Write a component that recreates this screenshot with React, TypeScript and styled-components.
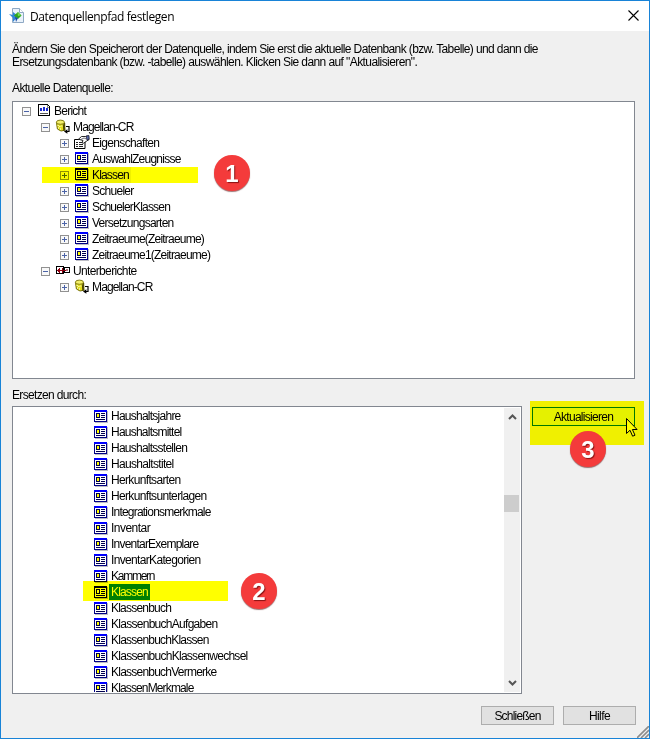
import React from "react";
import styled, { createGlobalStyle } from "styled-components";

const GlobalStyle = createGlobalStyle`
  * { box-sizing: border-box; }
  body { margin: 0; background: #f0f0f0; }
`;

const Dialog = styled.div`
  position: relative;
  width: 650px;
  height: 739px;
  display: flex;
  flex-direction: column;
  overflow: hidden;
  border: 1px solid #1883d7;
  background: #f0f0f0;
  color: #000;
  font: 12px/16px "Liberation Sans", Arial, sans-serif;
  white-space: pre;
`;

const TitleBar = styled.header`
  display: flex;
  align-items: center;
  height: 30px;
  padding: 0 10px 0 8px;
  background: #fff;
`;

const Title = styled.h1`
  flex: 1;
  margin: 1px 0 0 5px;
  font: 12px/16px "Open Sans", "Noto Sans", sans-serif;
  letter-spacing: -0.42px;
`;

const CloseButton = styled.button`
  display: flex;
  margin-top: -1px;
  padding: 0;
  border: 0;
  background: none;
`;

const Body = styled.main`
  display: flex;
  flex-direction: column;
  padding: 12px 0 0 11px;
`;

const Line = styled.span<{ $track: number }>`
  display: block;
  letter-spacing: ${(p) => p.$track}px;
`;

const Description = styled.p`
  margin: 0;
  height: 37px;
  line-height: 13px;
`;

const Caption = styled.div<{ $track: number; $gap?: number }>`
  height: ${(p) => 21 - (p.$gap ? 2 : 0)}px;
  margin-top: ${(p) => p.$gap ?? 0}px;
  letter-spacing: ${(p) => p.$track}px;
  line-height: 17px;
`;

const Panel = styled.div<{ $w: number; $h: number }>`
  display: flex;
  width: ${(p) => p.$w}px;
  height: ${(p) => p.$h}px;
  padding: 1px;
  border: 1px solid #828790;
  background: #fff;
`;

const Rows = styled.div<{ $indent: number }>`
  flex: 1;
  overflow: hidden;
  padding-left: ${(p) => p.$indent}px;
`;

const Row = styled.div<{ $level: number }>`
  display: flex;
  align-items: center;
  height: 16px;
  padding-left: ${(p) => p.$level * 19}px;
`;

const Slot = styled.span<{ $drop?: number }>`
  display: flex;
  flex: none;
  width: 16px;
  height: 16px;
  padding-top: ${(p) => p.$drop ?? 0}px;
`;

const RowText = styled.span<{ $state?: "dim" | "active"; $track: number }>`
  height: 16px;
  padding: 0 2px;
  letter-spacing: ${(p) => p.$track}px;
  background: ${(p) => (p.$state === "dim" ? "#f0f0f0" : p.$state === "active" ? "#008000" : "none")};
  color: ${(p) => (p.$state === "active" ? "#fff" : "#000")};
`;

const Toggle = styled.svg`
  flex: none;
  margin: 1px 5px 0 0;
`;

const Scrollbar = styled.div`
  display: flex;
  flex-direction: column;
  align-items: center;
  width: 16px;
  padding: 5px 0;
  background: #f0f0f0;
`;

const Thumb = styled.div`
  width: 15px;
  height: 17px;
  margin: 73px 1px auto 0;
  background: #cdcdcd;
`;

const Columns = styled.div`
  display: flex;
  gap: 10px;
`;

const Button = styled.button<{ $w: number; $track: number; $focus?: boolean }>`
  width: ${(p) => p.$w}px;
  height: 19px;
  padding: 1px 0 0;
  border: 1px solid ${(p) => (p.$focus ? "#0078d7" : "#adadad")};
  background: ${(p) => (p.$focus ? "#e5f1fb" : "#e1e1e1")};
  color: #000;
  font: inherit;
  letter-spacing: ${(p) => p.$track}px;
  line-height: 16px;
`;

const ActionSlot = styled.div`
  padding-top: 1px;
`;

const Footer = styled.footer`
  display: flex;
  gap: 9px;
  padding: 12px 0 0 469px;
`;

const Marker = styled.div<{ $x: number; $y: number; $w: number; $h: number }>`
  position: absolute;
  left: ${(p) => p.$x}px;
  top: ${(p) => p.$y}px;
  width: ${(p) => p.$w}px;
  height: ${(p) => p.$h}px;
  background: #ff0;
  mix-blend-mode: multiply;
`;

const Badge = styled.div<{ $x: number; $y: number }>`
  position: absolute;
  left: ${(p) => p.$x}px;
  top: ${(p) => p.$y}px;
  width: 36px;
  height: 36px;
  border-radius: 50%;
  background: #f43b3b;
  box-shadow: 0 1px 1px rgba(90, 20, 20, 0.6);
  color: #fff;
  font: bold 24px/37px "Liberation Sans", Arial, sans-serif;
  text-align: center;
  text-shadow: 1px 1px 1px rgba(90, 0, 0, 0.7);
`;

const Pointer = styled.svg`
  position: absolute;
  left: 624px;
  top: 416px;
`;

const Grip = styled.svg`
  position: absolute;
  right: 0;
  bottom: 0;
`;

type Kind = "report" | "db" | "props" | "table" | "sub";

function Icon({ kind }: { kind: Kind }) {
  return (
    <svg width="16" height="16" viewBox="0 0 16 16" shapeRendering="crispEdges">
      {kind === "table" && (
        <>
          <path d="M2 2h13v12H2z" fill="#bdbdc4" />
          <path d="M1 1h13v12H1z" fill="#000084" />
          <path d="M1 1h13v2H1z" fill="#00f" />
          <path d="M2 3h11v9H2z" fill="#fff" />
          <path d="M3 4h4v5H3zM8 4h4v1H8zM8 6h4v1H8zM8 8h4v1H8zM3 10h9v1H3z" fill="#000050" />
          <path d="M4 5h2v3H4z" fill="#ff0" />
        </>
      )}
      {kind === "report" && (
        <>
          <path d="M2.5 1.5h9l2 2v9h-11z" fill="#fff" stroke="#000" />
          <path d="M11 2h1v2h1v1h-2z" fill="#888" />
          <path d="M4 5h2v3H4zM7 4h2v4H7zM10 5h2v3h-2z" fill="#1c2cd0" />
          <path d="M4 10h8v1H4z" fill="#555" />
        </>
      )}
      {kind === "db" && (
        <g shapeRendering="auto">
          <path d="M1.4 3.5l1 6.5q3.5 3.4 7.5 1.2l-.6-8z" fill="#e3df18" stroke="#6b6508" strokeWidth=".9" />
          <ellipse cx="5.4" cy="3.2" rx="4" ry="2.1" fill="#f4ef6a" stroke="#77720c" strokeWidth=".9" />
          <path d="M2.6 6h1v1h-1zM4.4 7h1v1h-1zM3 8.6h1v1H3zM5 9.6h1v1H5zM6.4 6.6h1v1h-1z" fill="#fff" />
          <path d="M8.3 5.2l.5 6.6M9.7 4v7.5" stroke="#4a4505" />
          <path d="M11 7.5h3v5h-2.6" fill="none" stroke="#000" strokeWidth="1.2" />
          <path d="M12.4 10.2v4.6l-3.4-2.3z" fill="#000" />
        </g>
      )}
      {kind === "props" && (
        <g shapeRendering="auto">
          <path d="M.5 4.5h10.5v9H.5z" fill="#fff" stroke="#000" />
          <path d="M2 7h2v1H2zM5 7h4v1H5zM2 9h2v1H2zM5 9h4v1H5zM2 11h2v1H2zM5 11h4v1H5z" fill="#222" />
          <path d="M4.5 4.2l3-2.7h4l3-.5.5 3.5-3 2-2.4 1.7-1.6-.4 1-2.3z" fill="#fff" stroke="#111" strokeWidth=".9" />
          <path d="M7 4.4l3-1.4 2.4 1" fill="none" stroke="#334" strokeWidth=".7" />
          <path d="M12 1l3-.4v4l-2 .4z" fill="#5a6cae" stroke="#112" strokeWidth=".7" />
        </g>
      )}
      {kind === "sub" && (
        <>
          <path d="M1.5 3.5h7v7h-7z" fill="#fff" stroke="#000" />
          <path d="M9.5 4.5h5v5h-5z" fill="#fff" stroke="#000" />
          <path d="M2 7h9v1H2zM3 6h1v3H3zM4 5h1v5H4zM7 5h1v5H7z" fill="#900010" />
          <path d="M11 6h2v2h-2z" fill="#b07078" />
        </>
      )}
    </svg>
  );
}

function Expander({ open }: { open?: boolean }) {
  return (
    <Toggle width="9" height="9" viewBox="0 0 9 9" shapeRendering="crispEdges">
      <path d="M.5.5h8v8h-8z" fill="#f8f8f8" stroke="#919191" />
      <path d="M2 4h5v1H2z" fill="#4b63a7" />
      {!open && <path d="M4 2h1v5H4z" fill="#4b63a7" />}
    </Toggle>
  );
}

type Node = { level: number; text: string; kind: Kind; track: number; open?: boolean; dim?: boolean };

const tree: Node[] = [
  { level: 0, text: "Bericht", kind: "report", track: -0.76, open: true },
  { level: 1, text: "Magellan-CR", kind: "db", track: -0.87, open: true },
  { level: 2, text: "Eigenschaften", kind: "props", track: -0.67 },
  { level: 2, text: "AuswahlZeugnisse", kind: "table", track: -0.76 },
  { level: 2, text: "Klassen", kind: "table", track: -0.84, dim: true },
  { level: 2, text: "Schueler", kind: "table", track: -0.73 },
  { level: 2, text: "SchuelerKlassen", kind: "table", track: -0.8 },
  { level: 2, text: "Versetzungsarten", kind: "table", track: -0.74 },
  { level: 2, text: "Zeitraeume(Zeitraeume)", kind: "table", track: -0.79 },
  { level: 2, text: "Zeitraeume1(Zeitraeume)", kind: "table", track: -0.78 },
  { level: 1, text: "Unterberichte", kind: "sub", track: -0.65, open: true },
  { level: 2, text: "Magellan-CR", kind: "db", track: -0.87 },
];

const tables: { text: string; track: number }[] = [
  { text: "Haushaltsjahre", track: -0.75 },
  { text: "Haushaltsmittel", track: -0.77 },
  { text: "Haushaltsstellen", track: -0.75 },
  { text: "Haushaltstitel", track: -0.68 },
  { text: "Herkunftsarten", track: -0.66 },
  { text: "Herkunftsunterlagen", track: -0.66 },
  { text: "Integrationsmerkmale", track: -0.79 },
  { text: "Inventar", track: -0.52 },
  { text: "InventarExemplare", track: -0.78 },
  { text: "InventarKategorien", track: -0.66 },
  { text: "Kammern", track: -1.25 },
  { text: "Klassen", track: -0.84 },
  { text: "Klassenbuch", track: -0.79 },
  { text: "KlassenbuchAufgaben", track: -0.72 },
  { text: "KlassenbuchKlassen", track: -0.77 },
  { text: "KlassenbuchKlassenwechsel", track: -0.73 },
  { text: "KlassenbuchVermerke", track: -0.77 },
  { text: "KlassenMerkmale", track: -0.86 },
];

export default function App() {
  return (
    <>
      <GlobalStyle />
      <Dialog>
        <TitleBar>
          <svg width="16" height="16" viewBox="0 0 16 16">
            <path d="M3.5.5h7l4 4v10h-11z" fill="#e9f2fb" stroke="#8fa9c4" />
            <path d="M10.5.5v4h4" fill="#fff" stroke="#8fa9c4" />
            <path d="M0 6l4 1V4l5 4-5 6v-4z" fill="#2f86d8" />
            <path d="M5 7.5l4-3.5 3.6 3.4L9 11z" fill="#2fa51f" />
            <path d="M8.5 4.5L12 7.2 9 8z" fill="#7be04e" />
            <path d="M6 9l3 1-2 4z" fill="#1a4da8" />
          </svg>
          <Title>Datenquellenpfad festlegen</Title>
          <CloseButton aria-label="Schließen">
            <svg width="11" height="11" viewBox="0 0 11 11">
              <path d="M.5.5l10 10M10.5.5l-10 10" stroke="#000" strokeWidth="1.1" />
            </svg>
          </CloseButton>
        </TitleBar>
        <Body>
          <Description>
            <Line $track={-0.62}>Ändern Sie den Speicherort der Datenquelle, indem Sie erst die aktuelle Datenbank (bzw. Tabelle) und dann die</Line>
            <Line $track={-0.59}>Ersetzungsdatenbank (bzw. -tabelle) auswählen. Klicken Sie dann auf "Aktualisieren".</Line>
          </Description>
          <Caption $track={-0.59}>Aktuelle Datenquelle:</Caption>
          <Panel $w={623} $h={278}>
            <Rows $indent={8}>
              {tree.map((n, i) => (
                <Row key={i} $level={n.level}>
                  <Expander open={n.open} />
                  <Slot><Icon kind={n.kind} /></Slot>
                  <RowText $state={n.dim ? "dim" : undefined} $track={n.track}>{n.text}</RowText>
                </Row>
              ))}
            </Rows>
          </Panel>
          <Caption $track={-0.66} $gap={8}>Ersetzen durch:</Caption>
          <Columns>
            <Panel $w={510} $h={288}>
              <Rows $indent={79}>
                {tables.map((t) => (
                  <Row key={t.text} $level={0}>
                    <Slot $drop={1}><Icon kind="table" /></Slot>
                    <RowText $state={t.text === "Klassen" ? "active" : undefined} $track={t.track}>{t.text}</RowText>
                  </Row>
                ))}
              </Rows>
              <Scrollbar>
                <svg width="9" height="9" viewBox="0 0 9 9"><path d="M1 6l3.5-3.5L8 6" fill="none" stroke="#555" strokeWidth="2" /></svg>
                <Thumb />
                <svg width="9" height="9" viewBox="0 0 9 9"><path d="M1 3l3.5 3.5L8 3" fill="none" stroke="#555" strokeWidth="2" /></svg>
              </Scrollbar>
            </Panel>
            <ActionSlot>
              <Button $w={103} $track={-0.7} $focus>Aktualisieren</Button>
            </ActionSlot>
          </Columns>
          <Footer>
            <Button $w={73} $track={-0.8}>Schließen</Button>
            <Button $w={73} $track={-0.6}>Hilfe</Button>
          </Footer>
        </Body>
        <Pointer width="13" height="21" viewBox="0 0 13 21">
          <path d="M1.5 1.5v15l3.5-3.3 2.6 6 2.4-1-2.6-5.7h4.7z" fill="#fff" stroke="#000" />
        </Pointer>
        <Marker $x={41} $y={166} $w={156} $h={16} />
        <Marker $x={82} $y={580} $w={145} $h={20} />
        <Marker $x={529} $y={400} $w={114} $h={44} />
        <Badge $x={213} $y={154}>1</Badge>
        <Badge $x={240} $y={572}>2</Badge>
        <Badge $x={569} $y={430}>3</Badge>
        <Grip width="12" height="12" viewBox="0 0 12 12">
          <path d="M0 12L12 0M4 12l8-8M8 12l4-4" stroke="#8c8c8c" strokeWidth="1.6" />
        </Grip>
      </Dialog>
    </>
  );
}
